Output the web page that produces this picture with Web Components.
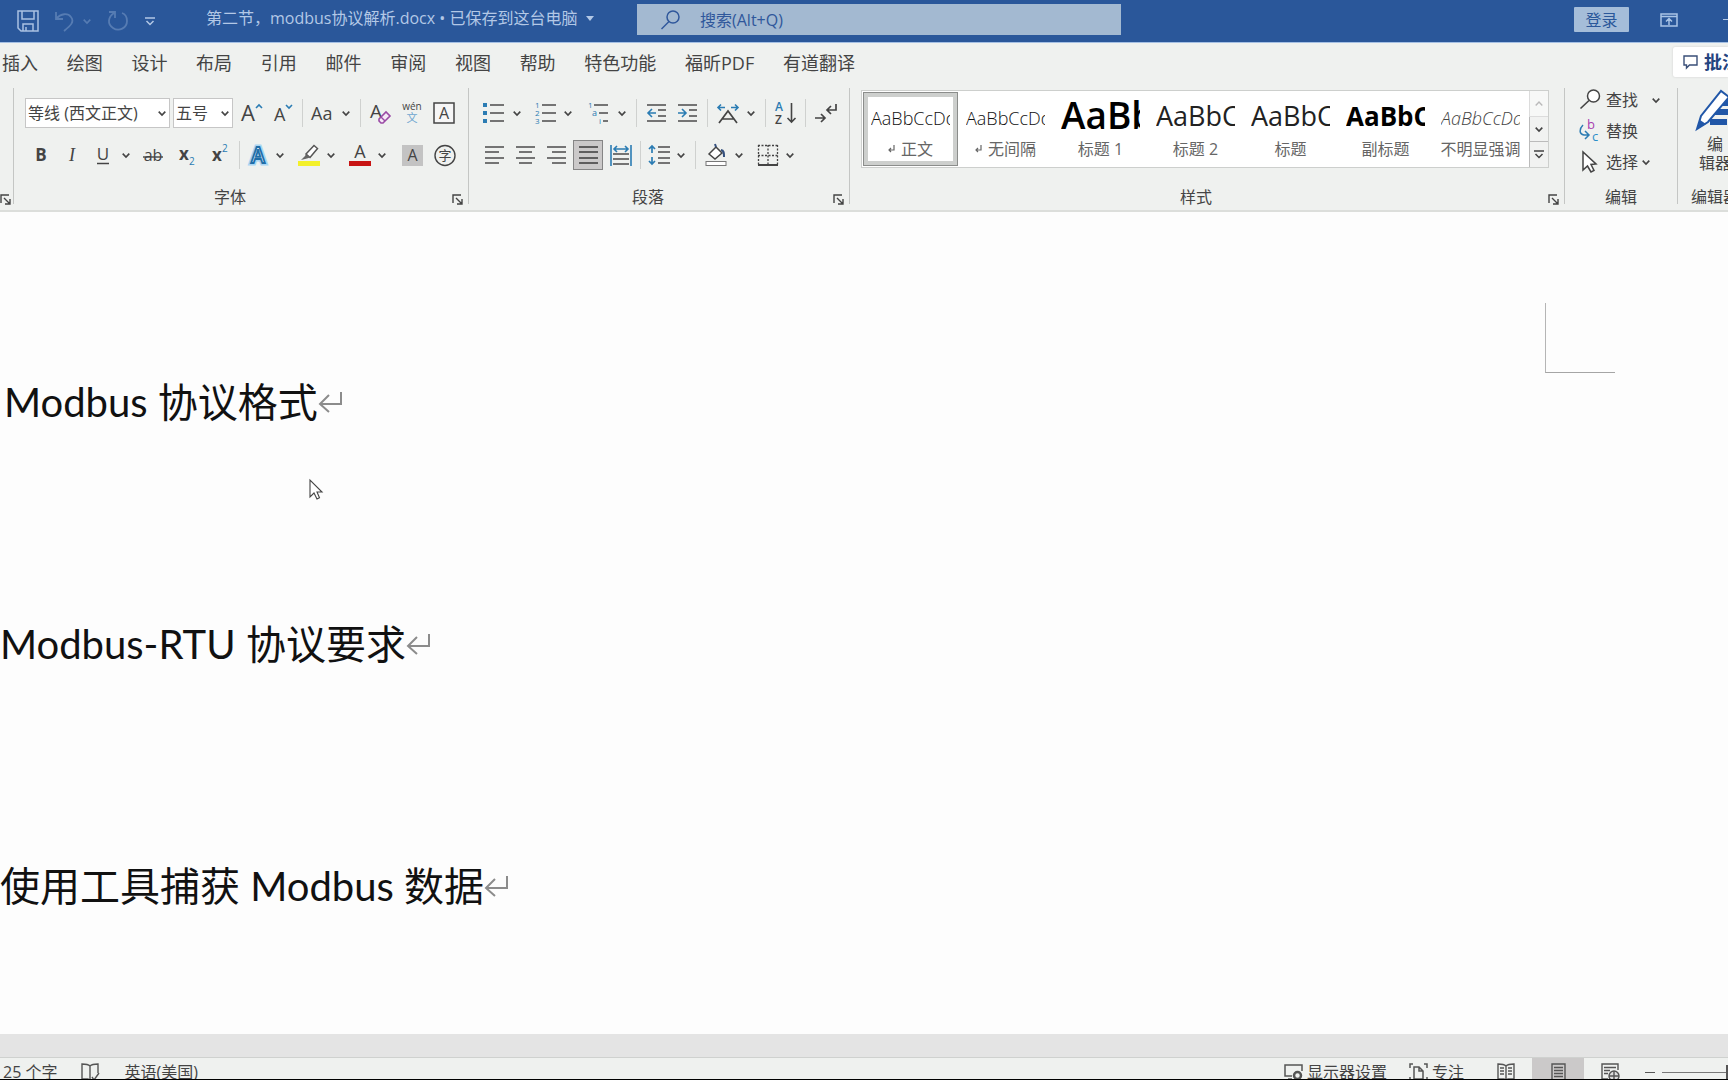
<!DOCTYPE html>
<html lang="zh-CN">
<head>
<meta charset="utf-8">
<title>第二节，modbus协议解析.docx</title>
<style>
  html, body { height: 100%; }
  body {
    margin: 0; display: flex; flex-direction: column; overflow: hidden;
    background: #fdfdfd; color: #444;
    font: 16px/24px "Open Sans", "Noto Sans CJK SC", sans-serif;
  }
  ribbon-bar { flex: none; }
  doc-canvas { flex: 1; min-height: 0; }
</style>
</head>
<body>
<title-bar></title-bar>
<tab-strip></tab-strip>
<ribbon-bar>
  <ribbon-group edge></ribbon-group>
  <ribbon-group label="字体" launcher kind="font">
    <tool-row>
      <combo-box name="字体名称" value="等线 (西文正文)" size="wide"></combo-box>
      <combo-box name="字号" value="五号"></combo-box>
      <tool-button icon="grow" name="增大字号"></tool-button>
      <tool-button icon="shrink" name="减小字号"></tool-button>
      <tool-sep></tool-sep>
      <tool-button icon="case" name="更改大小写" caret></tool-button>
      <tool-sep></tool-sep>
      <tool-button icon="clear" name="清除格式"></tool-button>
      <tool-button icon="pinyin" name="拼音指南"></tool-button>
      <tool-button icon="charborder" name="字符边框" w="l"></tool-button>
    </tool-row>
    <tool-row>
      <tool-button icon="bold" name="加粗"></tool-button>
      <tool-button icon="italic" name="倾斜"></tool-button>
      <tool-button icon="underline" name="下划线" caret></tool-button>
      <tool-button icon="strike" name="删除线" w="l"></tool-button>
      <tool-button icon="sub" name="下标" w="l"></tool-button>
      <tool-button icon="sup" name="上标"></tool-button>
      <tool-sep></tool-sep>
      <tool-button icon="effect" name="文本效果" w="s" caret gap></tool-button>
      <tool-button icon="marker" name="突出显示" w="s" caret gap></tool-button>
      <tool-button icon="fontcolor" name="字体颜色" w="s" caret gap></tool-button>
      <tool-button icon="shade" name="字符底纹"></tool-button>
      <tool-button icon="enclose" name="带圈字符" w="l"></tool-button>
    </tool-row>
  </ribbon-group>
  <ribbon-group label="段落" launcher kind="para">
    <tool-row>
      <tool-button icon="bullets" name="项目符号" caret gap></tool-button>
      <tool-button icon="numbers" name="编号" w="s" caret gap></tool-button>
      <tool-button icon="multilevel" name="多级列表" caret></tool-button>
      <tool-sep></tool-sep>
      <tool-button icon="outdent" name="减少缩进量"></tool-button>
      <tool-button icon="indent" name="增加缩进量"></tool-button>
      <tool-sep></tool-sep>
      <tool-button icon="asian" name="中文版式" caret></tool-button>
      <tool-sep></tool-sep>
      <tool-button icon="sort" name="排序"></tool-button>
      <tool-sep></tool-sep>
      <tool-button icon="marks" name="显示编辑标记"></tool-button>
    </tool-row>
    <tool-row>
      <tool-button icon="left" name="左对齐"></tool-button>
      <tool-button icon="center" name="居中"></tool-button>
      <tool-button icon="right" name="右对齐"></tool-button>
      <tool-button icon="justify" name="两端对齐" w="l" pressed></tool-button>
      <tool-button icon="distribute" name="分散对齐"></tool-button>
      <tool-sep></tool-sep>
      <tool-button icon="spacing" name="行距" w="s" caret></tool-button>
      <tool-sep></tool-sep>
      <tool-button icon="fill" name="底纹" caret gap></tool-button>
      <tool-button icon="borders" name="边框" w="s" caret></tool-button>
    </tool-row>
  </ribbon-group>
  <ribbon-group label="样式" launcher kind="styles"><style-gallery></style-gallery></ribbon-group>
  <ribbon-group label="编辑" kind="edit">
    <edit-command icon="find" far>查找</edit-command>
    <edit-command icon="replace">替换</edit-command>
    <edit-command icon="select" near>选择</edit-command>
  </ribbon-group>
  <ribbon-group label="编辑器" kind="editor"><editor-command></editor-command></ribbon-group>
</ribbon-bar>
<doc-canvas>
  <doc-line indent="1">Modbus 协议格式</doc-line>
  <doc-line>Modbus-RTU 协议要求</doc-line>
  <doc-line>使用工具捕获 Modbus 数据</doc-line>
</doc-canvas>
<status-bar></status-bar>

<script>
const RESET = `
  :host, *, *::before, *::after { box-sizing: border-box; }
  button { font: inherit; color: inherit; background: none; border: 0; padding: 0; margin: 0; }
  svg { display: block; flex: none; overflow: visible; }
  a { color: inherit; text-decoration: none; }
`;
const CARET = `<svg width="8" height="5" viewBox="0 0 8 5" fill="none" stroke="#444" stroke-width="1.6"><path d="M.7.6 4 4 7.3.6"/></svg>`;

function define(name, render) {
  customElements.define(name, class extends HTMLElement {
    constructor() { super(); this.attachShadow({ mode: "open" }); }
    connectedCallback() { this.shadowRoot.innerHTML = `<style>${RESET}</style>` + render(this); }
  });
}

const T = (x, y, size, text, extra = "") =>
  `<text x="${x}" y="${y}" font-size="${size}" font-family="Open Sans, Noto Sans CJK SC, sans-serif" fill="#444" ${extra}>${text}</text>`;
const lines = (rows, color = "#555") =>
  `<g stroke="${color}" stroke-width="1.6">${rows.map(([a, b, y]) => `<path d="M${a} ${y}H${b}"/>`).join("")}</g>`;

/* Every glyph is drawn on a 24 x 24 board. */
const ICONS = {
  grow: T(1, 20, 22, "A") + `<path d="M16 7l3-3 3 3" fill="none" stroke="#2b7cb3" stroke-width="1.6"/>`,
  shrink: T(3, 20, 18, "A") + `<path d="M15 4l3 3 3-3" fill="none" stroke="#2b7cb3" stroke-width="1.6"/>`,
  case: T(0, 19, 18, "Aa"),
  clear: T(1, 17, 19, "A") + `<path d="M10 18l7-7 4 4-7 7h-2l-2-2z" fill="#f4e8f6" stroke="#9a4aa5" stroke-width="1.6"/><path d="M12 16l4 4" stroke="#9a4aa5" stroke-width="1.4"/>`,
  pinyin: T(12, 9, 10, "wén", 'text-anchor="middle"') + T(12, 21, 11, "文", 'text-anchor="middle" style="fill:#6ea6d0"'),
  charborder: `<rect x="2" y="2" width="20" height="20" fill="#f6f6f6" stroke="#444" stroke-width="1.5"/>` + T(12, 18, 16, "A", 'text-anchor="middle"'),
  bold: T(12, 18, 17, "B", 'text-anchor="middle" font-weight="700"'),
  italic: `<text x="12" y="18" font-size="18" text-anchor="middle" font-style="italic" font-family="Liberation Serif, serif" fill="#444">I</text>`,
  underline: T(12, 17, 17, "U", 'text-anchor="middle"') + `<path d="M6 20.500h12" stroke="#444" stroke-width="1.500"/>`,
  strike: T(12, 18, 16, "ab", 'text-anchor="middle"') + `<path d="M2 14h20" stroke="#444" stroke-width="1.400"/>`,
  sub: T(4, 17, 17, "x", 'font-weight="700"') + T(14, 22, 10, "2", 'style="fill:#2b7cb3"'),
  sup: T(4, 18, 17, "x", 'font-weight="700"') + T(14, 9, 10, "2", 'style="fill:#2b7cb3"'),
  effect: `<text x="12" y="20" font-size="21" font-weight="600" text-anchor="middle" font-family="Open Sans, sans-serif" fill="#fff" stroke="#a9d5f2" stroke-width="5">A</text><text x="12" y="20" font-size="21" font-weight="600" text-anchor="middle" font-family="Open Sans, sans-serif" fill="#eaf5fc" stroke="#1f6ea8" stroke-width="1.800">A</text>`,
  marker: `<rect x="1" y="18" width="22" height="5" fill="#f3f02a"/><path d="M9 11L17 2.500l3.500 3L13 14.500z" fill="#fff" stroke="#555" stroke-width="1.500"/><path d="M9 11l4 3.500-3 1-6 1.500 4-4z" fill="#666"/>`,
  fontcolor: T(12, 15, 18, "A", 'text-anchor="middle"') + `<rect x="1" y="18" width="22" height="5" fill="#c81414"/>`,
  shade: `<rect x="1" y="2" width="21" height="21" fill="#c3c3c3"/>` + T(11.5, 18, 16, "A", 'text-anchor="middle"'),
  enclose: `<circle cx="12" cy="12.500" r="10" fill="none" stroke="#444" stroke-width="1.400"/>` + T(12, 17, 13, "字", 'text-anchor="middle"'),
  bullets: `<g fill="#2b7cb3"><rect x="1" y="2" width="4" height="4"/><rect x="1" y="10" width="4" height="4"/><rect x="1" y="18" width="4" height="4"/></g>` + lines([[8, 22, 4], [8, 22, 12], [8, 22, 20]]),
  numbers: T(1, 7, 8, "1", 'style="fill:#2b7cb3"') + T(1, 15, 8, "2", 'style="fill:#2b7cb3"') + T(1, 23, 8, "3", 'style="fill:#2b7cb3"') + lines([[8, 22, 4], [8, 22, 12], [8, 22, 20]]),
  multilevel: T(1, 7, 8, "1", 'style="fill:#2b7cb3"') + T(5, 15, 9, "a", 'style="fill:#2b7cb3"') + T(12, 23, 8, "i", 'style="fill:#2b7cb3"') + lines([[7, 21, 4], [12, 21, 12], [16, 21, 20]]),
  outdent: lines([[2, 21, 4], [13, 21, 9], [13, 21, 15], [2, 21, 20]]) + `<path d="M11 12H3m4-4l-4 4 4 4" fill="none" stroke="#2b7cb3" stroke-width="1.600"/>`,
  indent: lines([[2, 21, 4], [13, 21, 9], [13, 21, 15], [2, 21, 20]]) + `<path d="M2 12h8m-4-4l4 4-4 4" fill="none" stroke="#2b7cb3" stroke-width="1.600"/>`,
  asian: `<path d="M3 22L12 10l9 12M6.500 18h11" fill="none" stroke="#444" stroke-width="1.700"/><path d="M9 6.500H2m3-3l-3 3 3 3M15 6.500h7m-3-3l3 3-3 3" fill="none" stroke="#2b7cb3" stroke-width="1.600"/>`,
  sort: T(1, 10, 12, "A", 'font-weight="600" style="fill:#2b7cb3"') + T(1, 23, 12, "Z", 'font-weight="600"') + `<path d="M17.500 2v19m-4-4l4 4 4-4" fill="none" stroke="#444" stroke-width="1.600"/>`,
  marks: `<path d="M22 3v6h-9m4-4l-4 4 4 4M1 17h10m-4-4l4 4-4 4" fill="none" stroke="#444" stroke-width="1.700"/>`,
  left: lines([[3, 22, 4], [3, 17, 9], [3, 22, 15], [3, 17, 20]]),
  center: lines([[3, 22, 4], [6, 19, 9], [3, 22, 15], [6, 19, 20]]),
  right: lines([[3, 22, 4], [8, 22, 9], [3, 22, 15], [8, 22, 20]]),
  justify: lines([[3, 22, 4], [3, 22, 9], [3, 22, 15], [3, 22, 20]], "#444"),
  distribute: `<path d="M2 2v21M22 2v21M5 6h14M8 3L5 6l3 3M16 3l3 3-3 3" fill="none" stroke="#2b7cb3" stroke-width="1.600"/>` + lines([[4, 20, 11], [4, 20, 16], [4, 20, 21]]),
  spacing: `<path d="M5 3v7m0 4v7M2 6l3-3 3 3M2 18l3 3 3-3" fill="none" stroke="#2b7cb3" stroke-width="1.700"/>` + lines([[11, 23, 4], [11, 23, 9], [11, 23, 15], [11, 23, 20]]),
  fill: `<path d="M5 11l7-7 6 6-7 6z" fill="#fff" stroke="#444" stroke-width="1.500"/><path d="M12 4l-1-3M17 7c3 0 3 3 3 7" fill="none" stroke="#34507e" stroke-width="2"/><rect x="2" y="18.500" width="20" height="4" fill="#fff" stroke="#777"/>`,
  borders: `<path d="M2 2.500h20M2 12.500h20M2.500 2v20M12 2v20M21.500 2v20" fill="none" stroke="#444" stroke-width="1.300" stroke-dasharray="2 1.500"/><path d="M2 22h20" stroke="#444" stroke-width="2"/>`,
  find: `<circle cx="15.500" cy="8" r="6" fill="#fff" stroke="#444" stroke-width="1.500"/><path d="M11 12.500L2.500 20.500" stroke="#444" stroke-width="1.700"/>`,
  replace: T(9, 10, 13, "b", 'style="fill:#a83fb0"') + T(14, 22, 13, "c", 'style="fill:#2b8fc9"') + `<path d="M5 6c-4 4-4 9 1 10h5m-4-4l4 4-4 4" fill="none" stroke="#2b7cb3" stroke-width="1.500"/>`,
  select: `<path d="M5 2v18l4.500-4 3.500 6 3-1.500-3-6 5-.5z" fill="#fff" stroke="#444" stroke-width="1.500"/>`
};
const icon = (n) => `<svg width="24" height="24" viewBox="0 0 24 24">${ICONS[n]}</svg>`;

define("title-bar", () => `
  <style>
    :host { display: flex; flex: none; align-items: center; height: 43px; background: #2a579a; border-bottom: 1px solid #a5c0e4; color: #b3c8e6; overflow: hidden; }
    .quick { display: flex; align-items: center; gap: 16px; width: 206px; padding-left: 17px; flex: none; }
    .pair { display: flex; align-items: center; gap: 8px; opacity: .35; }
    .dim { opacity: .35; }
    .name { display: flex; align-items: center; gap: 9px; width: 431px; flex: none; white-space: nowrap; padding-bottom: 6px; }
    label { display: flex; flex: 0 1 484px; height: 31px; align-items: center; gap: 20px; padding-left: 24px; background: #a3b9d1; margin-bottom: 3px; color: #2f579b; }
    input { font: inherit; flex: 1; min-width: 0; border: 0; padding: 0; background: none; }
    input::placeholder { color: #2f579b; opacity: 1; }
    .end { margin-left: auto; display: flex; align-items: center; flex: none; margin-bottom: 3px; }
    .login { width: 55px; height: 25px; background: #a5bdd9; color: #2a579a; margin-right: 31px; border-radius: 1px; }
    .min { width: 5px; margin-left: 45px; height: 1px; background: #b3c8e6; }
  </style>
  <div class="quick">
    <button aria-label="保存"><svg width="22" height="22" viewBox="0 0 22 22" fill="none" stroke="#a9c1e2" stroke-width="1.500"><path d="M1 1h20v20H4l-3-3zM5 1v8h12V1M6 21v-7h10v7M9 21v-4"/></svg></button>
    <span class="pair"><button aria-label="撤消"><svg width="20" height="20" viewBox="0 0 20 20" fill="none" stroke="#a9c1e2" stroke-width="1.800"><path d="M1 1v7h7M1 8c5-6 12-6 15-2 4 5-1 9-7 14"/></svg></button>
    <svg width="8" height="5" viewBox="0 0 8 5" fill="none" stroke="#a9c1e2" stroke-width="1.600"><path d="M.7.6 4 4 7.300.6"/></svg></span>
    <button class="dim" aria-label="重复"><svg width="22" height="22" viewBox="0 0 22 22" fill="none" stroke="#a9c1e2" stroke-width="1.800"><path d="M2 2h6v6M7 3C1 7 0 14 6 18c6 4 14 0 14-7 0-4-2-7-5-8"/></svg></button>
    <button aria-label="自定义快速访问工具栏"><svg width="10" height="9" viewBox="0 0 10 9" fill="none" stroke="#b3c8e6" stroke-width="1.500"><path d="M0 1h10M1.500 4L5 7.500 8.500 4"/></svg></button>
  </div>
  <div class="name"><span>第二节，modbus协议解析.docx • 已保存到这台电脑</span><svg width="8" height="5" viewBox="0 0 8 5"><path d="M0 0h8L4 5z" fill="#b3c8e6"/></svg></div>
  <label><svg width="19" height="20" viewBox="0 0 19 20" fill="none" stroke="#2f579b" stroke-width="1.500"><circle cx="12" cy="7" r="6"/><path d="M8 11.500L.5 19"/></svg><input type="search" placeholder="搜索(Alt+Q)" aria-label="搜索"></label>
  <div class="end"><button class="login">登录</button>
    <button aria-label="功能区显示选项"><svg width="18" height="14" viewBox="0 0 18 14" fill="none" stroke="#a9c4e6" stroke-width="1.500"><path d="M1 1h16v12H1zM1 3.500h16M9 12V6M6 8.500L9 5.500l3 3"/></svg></button>
    <button class="min" aria-label="最小化"></button></div>`);

define("tab-strip", () => `
  <style>
    :host { display: flex; flex: none; justify-content: space-between; height: 42px; background: #eff1ef; font-size: 18px; overflow: hidden; }
    nav { display: flex; justify-content: space-between; align-items: center; width: 855px; padding: 0 0 2px 2px; white-space: nowrap; }
    button { display: flex; align-items: center; gap: 6px; width: 55px; height: 30px; margin-top: 4px; padding-left: 10px; background: #fff; color: #24447f; font-weight: 700; white-space: nowrap; overflow: hidden; border-radius: 2px 0 0 2px; box-shadow: 0 0 2px #c8c8c8; }
  </style>
  <nav>${["插入","绘图","设计","布局","引用","邮件","审阅","视图","帮助","特色功能","福昕PDF","有道翻译"].map(t => `<a href="#">${t}</a>`).join("")}</nav>
  <button><svg width="15" height="14" viewBox="0 0 15 14" fill="none" stroke="#3a4f78" stroke-width="1.400"><path d="M1 1h13v9H6.500L3.500 13v-3H1z"/></svg><span>批注</span></button>`);

define("ribbon-bar", () => `
  <style>:host { display: flex; height: 127px; padding: 3px 0 6px; background: #eff1ef; border-bottom: 2px solid #dcdedb; overflow: hidden; }</style><slot></slot>`);

define("ribbon-group", (el) => `
  <style>
    :host { display: flex; flex-direction: column; flex: none; border-right: 1px solid #c4c6c4; }
    :host([edge]) { width: 14px; }
    :host([kind=font]) { width: 455px; --pad: 10px 0 0 11px; }
    :host([kind=para]) { width: 381px; --pad: 10px 0 0 9px; }
    :host([kind=styles]) { flex: 1 1 0; min-width: 0; --pad: 2px 15px 0 11px; }
    :host([kind=edit]) { width: 113px; --pad: 0 0 0 13px; --gap: 7px; }
    :host([kind=editor]) { width: 50px; border: 0; overflow: hidden; }
    .body { flex: 1; display: flex; flex-direction: column; gap: var(--gap, 12px); padding: var(--pad, 0); }
    .foot { display: flex; align-items: center; height: 24px; margin-bottom: -5px; }
    .foot span { flex: 1; text-align: center; white-space: nowrap; }
    .foot button { width: 22px; padding: 4px 0 0 6px; flex: none; }
    :host([edge]) span { display: none; }
    :host([edge]) .foot button { padding-left: 0; }
    :host([kind=editor]) .foot { padding-left: 13px; }
  </style>
  <div class="body"><slot></slot></div>
  <div class="foot"><span>${el.getAttribute("label") || ""}</span>
  ${el.hasAttribute("launcher") || el.hasAttribute("edge") ? `<button aria-label="对话框启动器"><svg width="11" height="11" viewBox="0 0 11 11" fill="none" stroke="#444" stroke-width="1.400"><path d="M1 9V1h8M4 4l6 6M10 5v5H5"/></svg></button>` : ""}</div>`);

define("tool-row", () => `<style>:host { display: flex; height: 30px; align-items: center; }</style><slot></slot>`);
define("tool-sep", () => `<style>:host { width: 1px; height: 28px; margin: 0 4px; background: #cfd1cf; }</style>`);

define("tool-button", (el) => `
  <style>
    :host { display: flex; flex: none; --w: 31px; }
    :host([w=s]) { --w: 28px; } :host([w=l]) { --w: 34px; } :host([gap]) { margin-right: 5px; }
    button { display: flex; align-items: center; height: 30px; }
    .i { width: var(--w); height: 30px; display: flex; align-items: center; justify-content: center; }
    .c { width: 18px; padding-left: 4px; }
    :host([pressed]) .i { background: #cbc9c9; border: 1px solid #858585; margin: 0 2px; width: 30px; }
  </style>
  <button aria-label="${el.getAttribute("name")}"><span class="i">${icon(el.getAttribute("icon"))}</span>${el.hasAttribute("caret") ? `<span class="c">${CARET}</span>` : ""}</button>`);

define("combo-box", (el) => `
  <style>
    :host { display: grid; width: 60px; height: 30px; margin-right: 3px; align-items: center; }
    :host([size=wide]) { width: 145px; }
    select, svg { grid-area: 1 / 1; }
    select { appearance: none; width: 100%; height: 30px; font: inherit; color: #444; background: #fff; border: 1px solid #c6c6c6; border-radius: 0; padding: 0 0 0 2px; }
    svg { justify-self: end; margin-right: 4px; }
  </style>
  <select aria-label="${el.getAttribute("name")}"><option>${el.getAttribute("value")}</option></select>${CARET}`);

define("style-gallery", () => {
  const items = [["t", "AaBbCcDd", "正文", 1], ["t", "AaBbCcDd", "无间隔", 1], ["h1", "AaBb", "标题 1"], ["h2", "AaBbC", "标题 2"], ["h2", "AaBbC", "标题"], ["h2 b", "AaBbC", "副标题"], ["t i", "AaBbCcDd", "不明显强调"]];
  return `
  <style>
    :host { display: flex; height: 78px; background: #fff; border: 1px solid #cdcfcd; overflow: hidden; }
    .list { flex: 1; min-width: 0; display: flex; padding: 1px; overflow: hidden; }
    .item { display: flex; flex-direction: column; align-items: center; flex: none; width: 95px; height: 74px; padding: 0 8px; }
    .item.on { outline: 1px solid #8b8d8b; outline-offset: -1px; box-shadow: inset 0 0 0 5px #cdcfcd; }
    .p { width: 79px; height: 42px; line-height: 48px; overflow: hidden; white-space: nowrap; text-align: left; color: #222; flex: none; }
    .t { font-size: 18px; font-weight: 300; line-height: 52px; color: #111; }
    .h1 { font-size: 37px; font-weight: 600; line-height: 46px; color: #000; }
    .h2 { font-size: 27px; }
    .b { font-weight: 700; font-size: 26px; color: #000; } .i { font-style: italic; color: #444; }
    .n { display: flex; align-items: center; gap: 6px; height: 24px; color: #666; white-space: nowrap; margin-top: 3px; }
    .side { display: flex; flex-direction: column; width: 19px; flex: none; }
    .side button { flex: 1; display: flex; align-items: center; justify-content: center; background: #f1f2f1; border-left: 1px solid #bbb; border-bottom: 1px solid #bbb; }
    .side button:last-child { border-bottom: 0; }
    .off { opacity: .5; }
  </style>
  <div class="list">${items.map(([c, p, n, m], k) => `<button class="item${k ? "" : " on"}"><span class="p ${c}">${p}</span><span class="n">${m ? `<svg width="7" height="8" viewBox="0 0 7 8" fill="none" stroke="#666" stroke-width="1.200"><path d="M6 0v5H1M3 3L1 5l2 2"/></svg>` : ""}${n}</span></button>`).join("")}</div>
  <div class="side"><button class="off" aria-label="上一行"><svg width="8" height="5" viewBox="0 0 8 5" fill="none" stroke="#777" stroke-width="1.400"><path d="M.7 4.400 4 1l3.300 3.400"/></svg></button><button aria-label="下一行">${CARET}</button>
  <button aria-label="其他"><svg width="10" height="9" viewBox="0 0 10 9" fill="none" stroke="#444" stroke-width="1.500"><path d="M0 1h10M1.500 4L5 7.500 8.500 4"/></svg></button></div>`;
});

define("edit-command", (el) => `
  <style>
    :host { display: block; height: 24px; }
    button { display: flex; align-items: center; gap: 4px; height: 24px; }
    .c { margin-left: ${el.hasAttribute("far") ? 10 : 0}px; }
  </style>
  <button>${icon(el.getAttribute("icon"))}<slot></slot>${el.hasAttribute("far") || el.hasAttribute("near") ? `<span class="c">${CARET}</span>` : ""}</button>`);

define("editor-command", () => `
  <style>
    :host { display: block; }
    button { display: flex; flex-direction: column; width: 58px; padding-left: 18px; text-align: left; line-height: 19px; white-space: nowrap; }
    span { display: block; width: 48px; margin-left: 3px; }
    .a { padding-left: 8px; margin-top: 4px; }
  </style>
  <button><svg width="42" height="43" viewBox="0 0 42 43"><path d="M20 15h22M18 24h24M14 34h17" stroke="#2157a8" stroke-width="6"/><path d="M1 41L5 28 25 3l8 6L12 34z" fill="#fff" stroke="#2157a8" stroke-width="2"/><path d="M1 41l3-9 6 4z" fill="#2157a8"/></svg><span class="a">编</span><span>辑器</span></button>`);

define("doc-canvas", () => `
  <style>
    :host { display: grid; grid-template-columns: 1fr 70px; padding-right: 113px; background: #fdfdfd; overflow: hidden; position: relative; align-items: start; }
    .text { display: flex; flex-direction: column; gap: 182px; padding-top: 160px; }
    .corner { width: 70px; height: 70px; margin-top: 91px; border-left: 1px solid #b5b5b5; border-bottom: 1px solid #a5a5a5; }
    .pointer { position: absolute; left: 309px; top: 267px; }
  </style>
  <div class="text"><slot></slot></div><div class="corner"></div>
  <svg class="pointer" width="14" height="21" viewBox="0 0 14 21"><path d="M1 1v17l4-4 3 6 2.500-1.200L8 13h5z" fill="#fff" stroke="#444" stroke-width="1.100"/></svg>`);

define("doc-line", () => `
  <style>
    :host { display: block; }
    :host([indent]) { padding-left: 4px; }
    h2 { display: flex; align-items: center; gap: 1px; margin: 0; height: 60px; font: 400 40px/60px Lato, "Noto Sans CJK SC", sans-serif; color: #111; white-space: nowrap; }
  </style>
  <h2><span><slot></slot></span><svg width="23" height="20" viewBox="0 0 23 20" fill="none" stroke="#8c8c8c" stroke-width="2"><path d="M22 0v12H2M10 3L1 12l9 8"/></svg></h2>`);

define("status-bar", () => `
  <style>
    :host { display: block; flex: none; border-top: 23px solid #e4e4e4; border-bottom: 1px solid #000; }
    .bar { display: flex; height: 22px; padding-left: 3px; background: #eff1ef; border-top: 1px solid #cfd1cf; overflow: hidden; white-space: nowrap; }
    .bar > * { flex: none; height: 28px; display: flex; align-items: center; }
    .left { gap: 24px; }
    .right { margin-left: auto; }
    .right button { display: flex; align-items: center; height: 28px; gap: 4px; }
    .m { margin-right: 22px; }
    .f { margin-right: 16px; }
    .v { width: 52px; justify-content: center; }
    .on { background: #cbc9c9; }
    .right .minus { width: 10px; height: 1px; background: #555; margin: 0 7px 0 9px; }
    .track { display: flex; width: 66px; overflow: hidden; align-items: center; }
    input { appearance: none; flex: none; margin: 0; width: 132px; height: 16px; background: linear-gradient(#777, #777) center / 100% 1px no-repeat; }
    input::-webkit-slider-thumb { appearance: none; width: 5px; height: 14px; background: #555; }
  </style>
  <div class="bar">
    <div class="left"><span>25 个字</span><svg width="19" height="18" viewBox="0 0 19 18" fill="none" stroke="#555" stroke-width="1.400"><path d="M9 3v14M9 3C7 1 4 1 1 1v15h6l2 1.500M9 3c2-2 5-2 8-2v9M11 14l2 3 5-7"/></svg><span>英语(美国)</span></div>
    <div class="right">
      <button class="m"><svg width="19" height="18" viewBox="0 0 19 18" fill="none" stroke="#555" stroke-width="1.500"><path d="M8 13H1V2h17v6M4 16h4"/><circle cx="13.500" cy="12.500" r="3.500" stroke-width="2.500"/></svg>显示器设置</button>
      <button class="f"><svg width="19" height="19" viewBox="0 0 19 19" fill="none" stroke="#555" stroke-width="1.500"><path d="M1 5V1h3M15 1h3v4M1 14v4h3M18 14v4h-3M5 4h5l4 4v8H5zM10 4v4h4"/></svg>专注</button>
      <button class="v" aria-label="阅读视图"><svg width="18" height="18" viewBox="0 0 18 18" fill="none" stroke="#555" stroke-width="1.400"><path d="M9 3v14M9 3C7 1 4 1 1 1v15h6l2 1 2-1h6V1c-3 0-6 0-8 2M3 5h4M3 8h4M3 11h4M11 5h4M11 8h4M11 11h4"/></svg></button>
      <button class="v on" aria-label="页面视图"><svg width="15" height="18" viewBox="0 0 15 18" fill="none" stroke="#555" stroke-width="1.400"><path d="M1 1h13v16H1zM3 4.500h9M3 7.500h9M3 10.500h9M3 13.500h9"/></svg></button>
      <button class="v" aria-label="Web 版式视图"><svg width="18" height="18" viewBox="0 0 18 18" fill="none" stroke="#555" stroke-width="1.400"><path d="M7 16H1V1h16v6M3 4.500h12M3 7.500h6M3 10.500h4"/><circle cx="13" cy="13" r="5" fill="#ddd"/><path d="M8 13h10M13 8v10"/></svg></button>
      <button class="minus" aria-label="缩小"></button>
      <span class="track"><input type="range" aria-label="缩放"></span>
    </div>
  </div>`);
</script>
</body>
</html>
